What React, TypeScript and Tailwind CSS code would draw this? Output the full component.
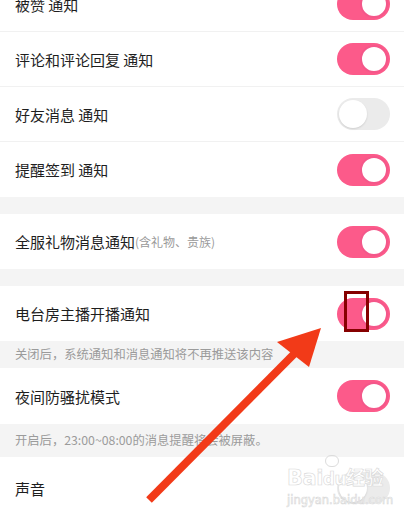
import React from 'react';

function Toggle({ on }: { on: boolean }) {
  return on ? (
    <div className="w-[53px] h-[32px] rounded-full bg-[#fc5a8a] flex items-center justify-end p-[2px]">
      <div className="w-[28px] h-[28px] rounded-full bg-white border-2 border-[#f4578a]" />
    </div>
  ) : (
    <div className="w-[53px] h-[32px] rounded-full bg-[#ebebeb] flex items-center justify-start p-[2px]">
      <div className="w-[28px] h-[28px] rounded-full bg-white shadow-[0_1px_2px_rgba(0,0,0,0.12)]" />
    </div>
  );
}

function Row({ label, on, h = 'h-[55px]', border = false, children }: { label: string; on: boolean; h?: string; border?: boolean; children?: React.ReactNode }) {
  return (
    <div className={`${h} bg-white flex items-center justify-between pl-[15px] pr-[14px] ${border ? 'border-b border-[#f1f1f1]' : ''}`}>
      <div className="text-[15px] text-[#1e1e1e] leading-none flex items-center">
        {label}
        {children}
      </div>
      <Toggle on={on} />
    </div>
  );
}

export default function App() {
  return (
    <div className="relative w-[404px] h-[511px] overflow-hidden bg-[#f4f4f4] font-['Noto_Sans_CJK_SC',sans-serif]">
      <div className="mt-[-23px] flex flex-col">
        <Row label="被赞 通知" on={true} border />
        <Row label="评论和评论回复 通知" on={true} border />
        <Row label="好友消息 通知" on={false} border />
        <Row label="提醒签到 通知" on={true} />
        <div className="h-[17px]" />
        <Row label="全服礼物消息通知" on={true}>
          <span className="text-[12px] text-[#9a9a9a]">(含礼物、贵族)</span>
        </Row>
        <div className="h-[17px]" />
        <Row label="电台房主播开播通知" on={true} />
        <div className="h-[27px] flex items-center pl-[15px] text-[12.3px] text-[#9b9b9b]">关闭后，系统通知和消息通知将不再推送该内容</div>
        <Row label="夜间防骚扰模式" on={true} h="h-[56px]" />
        <div className="h-[33px] flex items-center pl-[15px] text-[12.3px] text-[#9b9b9b]">开启后，23:00~08:00的消息提醒将会被屏蔽。</div>
        <Row label="声音" on={false} h="h-[62px]" />
      </div>

      {/* watermark */}
      <div className="absolute left-[287px] top-[455px] flex flex-col items-start text-white [-webkit-text-stroke:0.6px_#d8d8d8]">
        <div className="ml-[38px] w-[14px] h-[12px] rounded-full border border-[#dcdcdc]" />
        <div className="text-[21px] font-bold leading-none font-['DejaVu_Sans',sans-serif] tracking-tight">Bai<span className="text-[17px]">du</span><span className="font-['Noto_Sans_CJK_SC',sans-serif] text-[19px]">经验</span></div>
        <div className="text-[11.5px] leading-none mt-[6px] font-['DejaVu_Sans',sans-serif]">jingyan.baidu.com</div>
      </div>

      {/* highlight box */}
      <div className="absolute left-[344px] top-[291px] w-[25px] h-[41px] border-[3px] border-[#860000]" />

      {/* arrow */}
      <svg className="absolute left-0 top-0" width="404" height="511" viewBox="0 0 404 511">
        <line x1="149" y1="500" x2="298" y2="350" stroke="#f23a18" strokeWidth="8" />
        <polygon points="321,328 277,342 309,367" fill="#f23a18" />
      </svg>
    </div>
  );
}
